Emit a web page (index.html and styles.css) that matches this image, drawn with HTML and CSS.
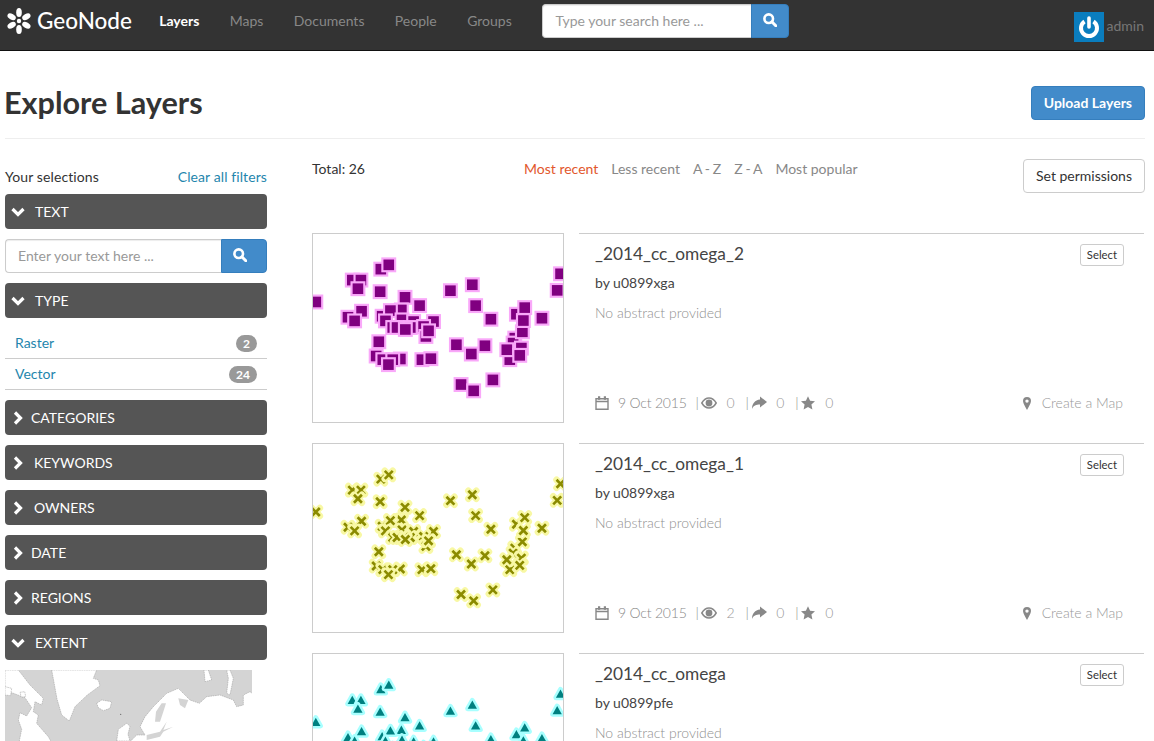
FILE: index.html
```html
<!doctype html>
<html lang="en">

<head>
    <meta charset="UTF-8">
    <link rel="stylesheet" href="styles.css">
    <title>Explore Layers - GeoNode</title>
</head>

<body>
    <svg class="defs" aria-hidden="true">
        <symbol id="i-search" viewBox="0 0 14 14">
            <circle cx="5.700" cy="5.700" r="4.300" fill="none" stroke="currentColor" stroke-width="2.600" />
            <path d="M8.800 8.800l4 4" stroke="currentColor" stroke-width="3" stroke-linecap="round" />
        </symbol>
        <symbol id="i-down" viewBox="0 0 14 14">
            <path d="M1.500 4l5.500 5.500L12.500 4" fill="none" stroke="currentColor" stroke-width="3.200" />
        </symbol>
        <symbol id="i-right" viewBox="0 0 14 14">
            <path d="M4 1.500L9.500 7 4 12.500" fill="none" stroke="currentColor" stroke-width="3.200" />
        </symbol>
        <symbol id="i-cal" viewBox="0 0 14 14">
            <path d="M1 2.800h12v10.500H1zM1 5.500h12" fill="none" stroke="currentColor" stroke-width="1.400" />
            <path d="M3 .3h2.200v3.400H3zM8.800 .3H11v3.400H8.800z" fill="currentColor" />
        </symbol>
        <symbol id="i-eye" viewBox="0 0 16 12">
            <path d="M.8 6C3 2.300 5.500 1 8 1s5 1.300 7.200 5C13 9.700 10.500 11 8 11S3 9.700.8 6z" fill="none" stroke="currentColor" stroke-width="1.500" />
            <circle cx="8" cy="6" r="3.400" fill="currentColor" />
        </symbol>
        <symbol id="i-share" viewBox="0 0 16 14">
            <path d="M9 .5l7 5.500-7 5.500V8.500c-4 0-6.500 1-8 4.500 0-5.500 3-9 8-9.500z" fill="currentColor" />
        </symbol>
        <symbol id="i-star" viewBox="0 0 14 14">
            <path d="M7 .3l2.100 4.500 4.900.5-3.600 3.300 1 4.900L7 11l-4.400 2.500 1-4.900L0 5.300l4.900-.5z" fill="currentColor" />
        </symbol>
        <symbol id="i-pin" viewBox="0 0 8 13">
            <path fill-rule="evenodd" d="M4 0a4 4 0 0 1 4 4c0 2.500-2.500 6-4 9-1.500-3-4-6.500-4-9a4 4 0 0 1 4-4zm0 2.400a1.700 1.700 0 1 0 0 3.400 1.700 1.700 0 0 0 0-3.400z" fill="currentColor" />
        </symbol>
    </svg>

    <header class="navbar">
        <a class="brand" href="#">
            <svg class="brand-mark" viewBox="0 0 26 26">
                <g fill="#fff">
                    <circle cx="13" cy="13" r="2.200" />
                    <ellipse cx="13" cy="4.500" rx="2.800" ry="4.500" />
                    <ellipse cx="13" cy="21.500" rx="2.800" ry="4.500" />
                    <ellipse cx="13" cy="4.500" rx="2.800" ry="4.500" transform="rotate(60 13 13)" />
                    <ellipse cx="13" cy="4.500" rx="2.800" ry="4.500" transform="rotate(120 13 13)" />
                    <ellipse cx="13" cy="4.500" rx="2.800" ry="4.500" transform="rotate(240 13 13)" />
                    <ellipse cx="13" cy="4.500" rx="2.800" ry="4.500" transform="rotate(300 13 13)" />
                </g>
            </svg>
            <span>GeoNode</span>
        </a>
        <nav class="nav-links">
            <a class="active" href="#">Layers</a>
            <a href="#">Maps</a>
            <a href="#">Documents</a>
            <a href="#">People</a>
            <a href="#">Groups</a>
        </nav>
        <form class="input-group nav-search">
            <input type="text" placeholder="Type your search here ...">
            <button type="button"><svg class="icon"><use href="#i-search" /></svg></button>
        </form>
        <a class="user" href="#">
            <svg class="avatar" viewBox="0 0 30 30">
                <rect width="30" height="30" fill="#0a7dbe" />
                <path d="M10.500 9.500a8 8 0 1 0 9 0" fill="none" stroke="#fff" stroke-width="4" />
                <path d="M15 6v9" stroke="#fff" stroke-width="3.600" stroke-linecap="round" />
            </svg>
            <span>admin</span>
        </a>
    </header>

    <div class="page-head">
        <h1>Explore Layers</h1>
        <a class="btn btn-primary" href="#">Upload Layers</a>
    </div>

    <div class="layout">
        <aside class="sidebar">
            <div class="selections">
                <span>Your selections</span>
                <a href="#">Clear all filters</a>
            </div>

            <div class="filter-head"><svg class="icon"><use href="#i-down" /></svg><span>TEXT</span></div>
            <form class="input-group side-search">
                <input type="text" placeholder="Enter your text here ...">
                <button type="button"><svg class="icon"><use href="#i-search" /></svg></button>
            </form>

            <div class="filter-head"><svg class="icon"><use href="#i-down" /></svg><span>TYPE</span></div>
            <ul class="facets">
                <li><a href="#">Raster</a><span class="badge">2</span></li>
                <li><a href="#">Vector</a><span class="badge">24</span></li>
            </ul>

            <div class="filter-head closed"><svg class="icon"><use href="#i-right" /></svg><span>CATEGORIES</span></div>
            <div class="filter-head closed wide"><svg class="icon"><use href="#i-right" /></svg><span>KEYWORDS</span></div>
            <div class="filter-head closed wide"><svg class="icon"><use href="#i-right" /></svg><span>OWNERS</span></div>
            <div class="filter-head closed"><svg class="icon"><use href="#i-right" /></svg><span>DATE</span></div>
            <div class="filter-head closed"><svg class="icon"><use href="#i-right" /></svg><span>REGIONS</span></div>
            <div class="filter-head"><svg class="icon"><use href="#i-down" /></svg><span>EXTENT</span></div>

            <svg class="extent-map" viewBox="15 15 741 300">
                <rect class="sea" x="15" y="15" width="741" height="300" />
                <g class="land">
                    <path d="M155 15l6 32 10 55 14 48 23 18 17-43 37-35 38-28-5-17-15-5 10-25z" />
                    <path d="M290 115l15-10 30 5-5 20-20 7-15-9z" />
                    <path d="M15 15h40l35 45 40 40-5 20-20-10-5 30 15 10-5 25 35 40 10 18v90H60l-2-95 7-35-10-28 5-22 20 10 15-25-20-30-40-15H15z" />
                    <path d="M60 82l14-2 3 14-13 3z" />
                    <path d="M15 65l20 5-3 22-17-2z" />
                    <path d="M350 228l5-35 25-18 10 8-6 25 6 20z" />
                    <path d="M390 315v-85l20-20h25l-15-25 15-30 25-30 40-40 35-15 35 35 28 10 22-20 40-5 40 15 10 20 20-5v-30l20-10 26 20v235z" />
                    <path d="M625 15l10 30-20 5-3-35zM690 15l10 25-10 50-10-5 5-45-5-25z" />
                </g>
                <g class="sea-in">
                    <path d="M485 115l13 0-8 25-10 30-15 0 3-30zM440 210l40-10 20-30-10 25 30-10-30 15-10 15-40 10z" />
                    <path d="M535 100l30 5-10 25-15-10z" />
                </g>
                <circle class="dot" cx="362" cy="148" r="2" />
            </svg>
        </aside>

        <main class="results">
            <div class="toolbar">
                <span class="total">Total: 26</span>
                <div class="sort">
                    <a class="active" href="#">Most recent</a>
                    <a href="#">Less recent</a>
                    <a class="letters" href="#">A - Z</a>
                    <a class="letters" href="#">Z - A</a>
                    <a href="#">Most popular</a>
                </div>
                <a class="btn" href="#">Set permissions</a>
            </div>

            <article class="layer">
                <svg class="thumb" data-shape="square" viewBox="22 16 753 567"></svg>
                <div class="layer-body">
                    <div class="layer-top">
                        <h4>_2014_cc_omega_2</h4>
                        <a class="btn-xs" href="#">Select</a>
                    </div>
                    <p class="owner">by u0899xga</p>
                    <p class="abstract">No abstract provided</p>
                    <div class="meta">
                        <svg class="icon cal"><use href="#i-cal" /></svg><span class="date">9 Oct 2015</span>
                        <span class="sep">|</span><svg class="icon eye"><use href="#i-eye" /></svg><span class="num">0</span>
                        <span class="sep">|</span><svg class="icon share"><use href="#i-share" /></svg><span class="num">0</span>
                        <span class="sep">|</span><svg class="icon star"><use href="#i-star" /></svg><span class="num">0</span>
                        <a class="create" href="#"><svg class="icon pin"><use href="#i-pin" /></svg>Create a Map</a>
                    </div>
                </div>
            </article>

            <article class="layer">
                <svg class="thumb" data-shape="cross" viewBox="22 16 753 567"></svg>
                <div class="layer-body">
                    <div class="layer-top">
                        <h4>_2014_cc_omega_1</h4>
                        <a class="btn-xs" href="#">Select</a>
                    </div>
                    <p class="owner">by u0899xga</p>
                    <p class="abstract">No abstract provided</p>
                    <div class="meta">
                        <svg class="icon cal"><use href="#i-cal" /></svg><span class="date">9 Oct 2015</span>
                        <span class="sep">|</span><svg class="icon eye"><use href="#i-eye" /></svg><span class="num">2</span>
                        <span class="sep">|</span><svg class="icon share"><use href="#i-share" /></svg><span class="num">0</span>
                        <span class="sep">|</span><svg class="icon star"><use href="#i-star" /></svg><span class="num">0</span>
                        <a class="create" href="#"><svg class="icon pin"><use href="#i-pin" /></svg>Create a Map</a>
                    </div>
                </div>
            </article>

            <article class="layer">
                <svg class="thumb" data-shape="triangle" viewBox="22 16 753 567"></svg>
                <div class="layer-body">
                    <div class="layer-top">
                        <h4>_2014_cc_omega</h4>
                        <a class="btn-xs" href="#">Select</a>
                    </div>
                    <p class="owner">by u0899pfe</p>
                    <p class="abstract">No abstract provided</p>
                    <div class="meta">
                        <svg class="icon cal"><use href="#i-cal" /></svg><span class="date">9 Oct 2015</span>
                        <span class="sep">|</span><svg class="icon eye"><use href="#i-eye" /></svg><span class="num">0</span>
                        <span class="sep">|</span><svg class="icon share"><use href="#i-share" /></svg><span class="num">0</span>
                        <span class="sep">|</span><svg class="icon star"><use href="#i-star" /></svg><span class="num">0</span>
                        <a class="create" href="#"><svg class="icon pin"><use href="#i-pin" /></svg>Create a Map</a>
                    </div>
                </div>
            </article>
        </main>
    </div>

    <script src="thumbs.js"></script>
</body>

</html>
```

FILE: styles.css
```css
* {
    box-sizing: border-box;
}

html,
body {
    height: 100%;
    overflow: hidden;
}

body {
    margin: 0;
    font-family: "Lato", "Liberation Sans", sans-serif;
    font-size: 14px;
    line-height: 20px;
    color: #333;
    background-color: #fff;
}

a {
    text-decoration: none;
}

.defs {
    display: none;
}

.icon {
    display: block;
    flex: none;
    width: 14px;
    height: 14px;
}

/* top bar */
.navbar {
    display: flex;
    align-items: center;
    height: 51px;
    padding: 4px 10px 12px 6px;
    background-color: #333;
    border-bottom: 1px solid #111;
}

.brand {
    display: flex;
    align-items: center;
    width: 138px;
    color: #fff;
    font-size: 22.500px;
    font-weight: 500;
}

.brand-mark {
    width: 26px;
    height: 26px;
    margin-right: 5px;
}

.nav-links {
    display: flex;
}

.nav-links a {
    padding: 0 15.200px;
    color: #888;
}

.nav-links a.active {
    color: #fff;
    font-weight: 700;
}

.input-group {
    display: flex;
    height: 34px;
}

.input-group input {
    flex: 1;
    min-width: 0;
    padding: 0 12px 2px;
    border: 1px solid #ccc;
    border-right: 0;
    border-radius: 4px 0 0 4px;
    font-family: inherit;
    font-size: 14px;
    color: #555;
    background-color: #fff;
    box-shadow: inset 0 1px 1px rgba(0, 0, 0, 0.075);
}

.input-group input::placeholder {
    color: #999;
    opacity: 1;
}

.input-group button {
    display: flex;
    align-items: center;
    padding: 0 0 2px 11px;
    color: #fff;
    background-color: #428bca;
    border: 1px solid #357ebd;
    border-radius: 0 4px 4px 0;
}

.nav-search {
    width: 247px;
    margin-left: 15.500px;
}

.nav-search button {
    width: 38px;
}

.user {
    display: flex;
    align-items: center;
    align-self: flex-start;
    margin-top: 8px;
    margin-left: auto;
    color: #777;
}

.user span {
    margin-bottom: 2px;
}

.avatar {
    width: 30px;
    height: 30px;
    margin-right: 3px;
}

/* heading */
.page-head {
    display: flex;
    align-items: center;
    justify-content: space-between;
    margin: 0 9px 0 5px;
    padding: 35px 0 18px;
    border-bottom: 1px solid #eee;
}

.page-head h1 {
    margin: 0 0 0 -1px;
    font-size: 30.600px;
    line-height: 34px;
    font-weight: 700;
    color: #333;
}

.btn {
    display: block;
    height: 34px;
    padding: 6px 12px;
    color: #333;
    background-color: #fff;
    border: 1px solid #ccc;
    border-radius: 4px;
}

.btn-primary {
    color: #fff;
    font-weight: 700;
    background-color: #428bca;
    border-color: #357ebd;
}

.layout {
    display: flex;
    gap: 45px;
    padding: 0 9px 0 5px;
}

/* left column */
.sidebar {
    flex: none;
    width: 262px;
    padding-top: 28px;
}

.selections {
    display: flex;
    justify-content: space-between;
    margin-bottom: 7px;
    letter-spacing: 0.100px;
}

.selections a {
    color: #1f86ad;
}

.filter-head {
    display: flex;
    align-items: center;
    height: 35px;
    margin-bottom: 10px;
    padding-left: 6px;
    color: #fff;
    background-color: #555;
    border-radius: 4px;
}

.filter-head .icon {
    margin-right: 10px;
}

.filter-head.closed .icon {
    margin-right: 6px;
}

.filter-head.closed.wide .icon {
    margin-right: 9px;
}

.side-search {
    margin-bottom: 10px;
}

.side-search button {
    width: 46px;
}

.facets {
    margin: 0 0 10px;
    padding: 0;
    list-style: none;
}

.facets li {
    display: flex;
    align-items: center;
    justify-content: space-between;
    height: 31px;
    padding: 0 10px;
    border-bottom: 1px solid #ccc;
}

.facets a {
    color: #1f86ad;
}

.badge {
    padding: 1px 7px;
    font-size: 12px;
    line-height: 15px;
    font-weight: 700;
    color: #fff;
    background-color: #999;
    border-radius: 10px;
}

.extent-map {
    display: block;
    width: 247px;
    height: 100px;
}

.sea,
.sea-in {
    fill: #d4d4d4;
}

.land {
    fill: #fff;
    stroke: #999;
    stroke-width: 1.500;
    stroke-dasharray: 5 2;
}

.dot {
    fill: #666;
}

/* results */
.results {
    flex: 1;
    min-width: 0;
    padding-top: 20px;
}

.toolbar {
    display: flex;
    align-items: flex-start;
    height: 74px;
}

.total {
    width: 212px;
}

.sort {
    display: flex;
    gap: 13px;
}

.sort a {
    color: #888;
}

.sort a.active {
    color: #e2572c;
}

.sort a.letters {
    word-spacing: -0.800px;
}

.toolbar .btn {
    margin-left: auto;
}

.layer {
    display: flex;
    gap: 15px;
    height: 190px;
    margin-bottom: 20px;
    padding-right: 1px;
}

.thumb {
    flex: none;
    width: 252px;
    height: 190px;
    border: 1px solid #ccc;
    background-color: #fff;
}

.pt-square {
    fill: #800080;
    stroke: #f9a8f9;
    stroke-width: 13;
    paint-order: stroke;
}

.pt-halo {
    fill: none;
    stroke: #f8f8a4;
    stroke-width: 20;
    stroke-linecap: round;
}

.pt-cross {
    fill: none;
    stroke: #8b8b00;
    stroke-width: 8;
}

.pt-triangle {
    fill: #008080;
    stroke: #a8ffff;
    stroke-width: 15;
    stroke-linejoin: round;
    paint-order: stroke;
}

.layer-body {
    display: flex;
    flex: 1;
    flex-direction: column;
    padding: 10px 21px 10px 16px;
    border-top: 1px solid #ccc;
}

.layer-top {
    display: flex;
    align-items: flex-start;
    justify-content: space-between;
    margin-right: -1px;
}

.layer-top h4 {
    margin: 0;
    font-size: 17.300px;
    line-height: 20px;
    font-weight: 400;
    color: #444;
}

.btn-xs {
    height: 22px;
    padding: 0 6px;
    font-size: 11.300px;
    line-height: 20px;
    color: #333;
    border: 1px solid #ccc;
    border-radius: 3px;
}

.owner {
    margin: 7px 0 0;
    color: #444;
}

.abstract {
    margin: 10px 0 0;
    color: #909090;
    font-weight: 300;
}

.meta {
    display: flex;
    align-items: center;
    margin-top: auto;
    color: #888;
    font-weight: 300;
}

.meta .cal {
    margin-right: 9px;
}

.date {
    margin-right: -1px;
    letter-spacing: -0.200px;
}

.meta .eye {
    width: 16px;
    height: 12px;
}

.meta .share {
    width: 16px;
    height: 14px;
}

.meta .star {
    margin-right: 1px;
}

.sep {
    margin: 0 2px 0 10px;
}

.num {
    margin-left: 9.500px;
    min-width: 9px;
    color: #999;
}

.create {
    display: flex;
    align-items: center;
    margin-left: auto;
    color: #999;
}

.create .pin {
    width: 8px;
    height: 13px;
    margin-right: 11px;
    color: #888;
}
```

FILE: thumbs.js
```javascript
// same sample points on every thumbnail, only the symbol changes
var POINTS = [
    [226, 122], [250, 109], [140, 155], [166, 155], [157, 181], [224, 190],
    [299, 207], [343, 232], [436, 187], [502, 169], [512, 232], [558, 273],
    [30, 221], [127, 267], [168, 249], [147, 278], [230, 264], [288, 245],
    [255, 247], [240, 278], [385, 280], [290, 275], [325, 280], [262, 298],
    [275, 298], [315, 298], [355, 295], [362, 325], [300, 304], [370, 308],
    [220, 341], [212, 384], [232, 395], [285, 393], [262, 395], [249, 410],
    [350, 395], [377, 392], [454, 350], [499, 378], [540, 353], [468, 470],
    [506, 489], [564, 456], [615, 395], [630, 330], [625, 345], [650, 360],
    [653, 311], [635, 258], [660, 238], [656, 277], [606, 365], [645, 382],
    [712, 270], [768, 136], [758, 186]
];

function drawPoint(shape, x, y) {
    if (shape === "square") {
        return '<rect class="pt-square" x="' + (x - 16) + '" y="' + (y - 16) + '" width="32" height="32"/>';
    }
    if (shape === "triangle") {
        var p = (x - 14) + "," + (y + 12) + " " + x + "," + (y - 13) + " " + (x + 14) + "," + (y + 12);
        return '<polygon class="pt-triangle" points="' + p + '"/>';
    }
    var d = "M" + (x - 12) + " " + (y - 12) + "l24 24m0-24l-24 24";
    return '<path class="pt-halo" d="' + d + '"/><path class="pt-cross" d="' + d + '"/>';
}

document.querySelectorAll(".thumb").forEach(function(svg) {
    var shape = svg.dataset.shape;
    svg.innerHTML = POINTS.map(function(pt) {
        return drawPoint(shape, pt[0], pt[1]);
    }).join("");
});
```
